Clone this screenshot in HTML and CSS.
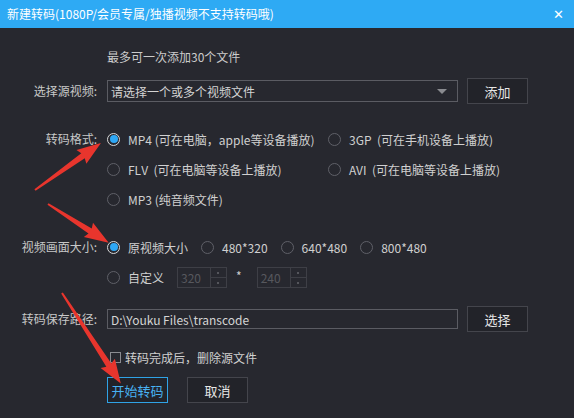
FILE: index.html
```html
<!DOCTYPE html>
<html lang="zh-CN">
<head>
<meta charset="utf-8">
<title>新建转码</title>
<link rel="stylesheet" href="styles.css">
</head>
<body>
<div class="window">
  <div class="titlebar">
    <span class="title">新建转码(1080P/会员专属/独播视频不支持转码哦)</span>
    <span class="close">✕</span>
  </div>
  <div class="content">
    <div class="note">最多可一次添加30个文件</div>

    <div class="row row-source">
      <div class="label">选择源视频:</div>
      <div class="field select">请选择一个或多个视频文件<span class="caret"></span></div>
      <div class="btn">添加</div>
    </div>

    <div class="row row-format">
      <div class="label lbl-top">转码格式:</div>
      <div class="format-grid">
        <div class="opt"><span class="radio checked"></span><span>MP4 (可在电脑，apple等设备播放)</span></div>
        <div class="opt"><span class="radio"></span><span>3GP&nbsp; (可在手机设备上播放)</span></div>
        <div class="opt"><span class="radio"></span><span>FLV&nbsp; (可在电脑等设备上播放)</span></div>
        <div class="opt"><span class="radio"></span><span>AVI&nbsp; (可在电脑等设备上播放)</span></div>
        <div class="opt"><span class="radio"></span><span>MP3 (纯音频文件)</span></div>
      </div>
    </div>

    <div class="row row-size">
      <div class="label lbl-top">视频画面大小:</div>
      <div class="size-col">
        <div class="size-line">
          <div class="opt"><span class="radio checked"></span><span>原视频大小</span></div>
          <div class="opt"><span class="radio"></span><span>480*320</span></div>
          <div class="opt"><span class="radio"></span><span>640*480</span></div>
          <div class="opt"><span class="radio"></span><span>800*480</span></div>
        </div>
        <div class="size-line">
          <div class="opt"><span class="radio"></span><span>自定义</span></div>
          <div class="spin"><span class="spin-val">320</span><span class="spin-btns"><i class="up"></i><i class="down"></i></span></div>
          <span class="times">*</span>
          <div class="spin"><span class="spin-val">240</span><span class="spin-btns"><i class="up"></i><i class="down"></i></span></div>
        </div>
      </div>
    </div>

    <div class="row row-path">
      <div class="label">转码保存路径:</div>
      <div class="field path">D:\Youku Files\transcode</div>
      <div class="btn">选择</div>
    </div>

    <div class="row row-check">
      <span class="checkbox"></span><span>转码完成后，删除源文件</span>
    </div>

    <div class="row row-actions">
      <div class="btn btn-primary">开始转码</div>
      <div class="btn">取消</div>
    </div>
  </div>

  <svg class="arrows" width="574" height="418" viewBox="0 0 574 418">
    <g fill="#e8352d">
      <g transform="translate(35,190) rotate(-35.5)">
        <polygon points="0,-1 59,-3 57,-8.5 81,0 57,8.5 59,3 0,1"/>
      </g>
      <g transform="translate(48,204) rotate(32.6)">
        <polygon points="0,-1 50,-3 48,-8.5 72,0 48,8.5 50,3 0,1"/>
      </g>
      <g transform="translate(62,293) rotate(57)">
        <polygon points="0,-1 86,-3 84,-8.5 108,0 84,8.5 86,3 0,1"/>
      </g>
    </g>
  </svg>
</div>
</body>
</html>
```

FILE: styles.css
```css
* { box-sizing: border-box; }

html, body {
  margin: 0;
  padding: 0;
}

body {
  width: 574px;
  height: 418px;
  overflow: hidden;
  background: #27282f;
  font-family: "Noto Sans CJK SC", "Noto Sans", sans-serif;
  font-size: 12px;
  color: #cfcfcf;
}

.window {
  position: relative;
  width: 574px;
  height: 418px;
  background: #27282f;
}

.titlebar {
  height: 28px;
  background: #2eaaf4;
  display: flex;
  align-items: center;
  justify-content: space-between;
  padding: 0 10px 0 7px;
  color: #ffffff;
}

.title {
  font-size: 12px;
  line-height: 28px;
}

.close {
  font-size: 13px;
  font-weight: bold;
  font-family: "DejaVu Sans", sans-serif;
}

.content {
  padding-top: 21px;
}

.note {
  line-height: 16px;
  height: 16px;
  padding-left: 107px;
  color: #cccccc;
}

.row {
  display: flex;
  align-items: center;
}

.label {
  width: 97px;
  flex: none;
  text-align: right;
  margin-right: 10px;
  color: #c8c8c8;
  line-height: 20px;
}

.lbl-top {
  align-self: flex-start;
}

.row-source {
  margin-top: 13px;
  height: 26px;
}

.field {
  width: 351px;
  border: 1px solid #5b5c63;
  background: #27282f;
  display: flex;
  align-items: center;
  padding-left: 3px;
  color: #d4d4d4;
}

.select {
  height: 22px;
  position: relative;
}

.caret {
  position: absolute;
  right: 10px;
  top: 8px;
  width: 0;
  height: 0;
  border-left: 5px solid transparent;
  border-right: 5px solid transparent;
  border-top: 5px solid #8a8b90;
}

.btn {
  width: 61px;
  height: 26px;
  border: 1px solid #44454c;
  background: #222329;
  color: #e6e6e6;
  font-size: 13px;
  display: flex;
  align-items: center;
  justify-content: center;
  margin-left: 9px;
}

.row-format {
  margin-top: 25px;
  align-items: flex-start;
}

.format-grid {
  display: grid;
  grid-template-columns: 221px auto;
  row-gap: 10px;
}

.opt {
  display: flex;
  align-items: center;
  height: 20px;
  color: #d0d0d0;
  white-space: nowrap;
}

.radio {
  width: 13px;
  height: 13px;
  border: 1px solid #5f6068;
  border-radius: 50%;
  margin-right: 8px;
  flex: none;
  display: flex;
  align-items: center;
  justify-content: center;
}

.radio.checked {
  border: 1.5px solid #d8d8d8;
}

.radio.checked::after {
  content: "";
  width: 8px;
  height: 8px;
  border-radius: 50%;
  background: #2fa8f5;
}

.row-size {
  margin-top: 27px;
  align-items: flex-start;
}

.row-size .label {
  line-height: 22px;
}

.size-col {
  display: flex;
  flex-direction: column;
  gap: 8px;
}

.size-line {
  display: flex;
  align-items: center;
  height: 22px;
  gap: 13px;
}

.spin {
  width: 50px;
  height: 21px;
  border: 1px solid #3e3f46;
  display: flex;
  align-items: stretch;
}

.spin-val {
  flex: 1;
  padding-left: 3px;
  color: #57585e;
  line-height: 19px;
}

.spin-btns {
  width: 16px;
  border-left: 1px solid #3e3f46;
  display: flex;
  flex-direction: column;
}

.spin-btns i {
  flex: 1;
  position: relative;
}

.spin-btns .up {
  border-bottom: 1px solid #3e3f46;
}

.spin-btns i::after {
  content: "";
  position: absolute;
  left: 6px;
  top: 4px;
  width: 2px;
  height: 2px;
  background: #55565c;
}

.times {
  color: #cccccc;
  margin: 0 2px 4px -4px;
}

.row-path {
  margin-top: 18px;
  height: 26px;
}

.path {
  height: 20px;
}

.row-check {
  margin-top: 15px;
  height: 20px;
  padding-left: 110px;
  color: #d0d0d0;
}

.checkbox {
  width: 11px;
  height: 11px;
  border: 1px solid #8a8b90;
  margin-right: 4px;
}

.row-actions {
  margin-top: 10px;
  padding-left: 98px;
  gap: 10px;
}

.btn-primary {
  border-color: #2fa3e6;
  color: #48b2f2;
}

.arrows {
  position: absolute;
  left: 0;
  top: 0;
  pointer-events: none;
}
```
